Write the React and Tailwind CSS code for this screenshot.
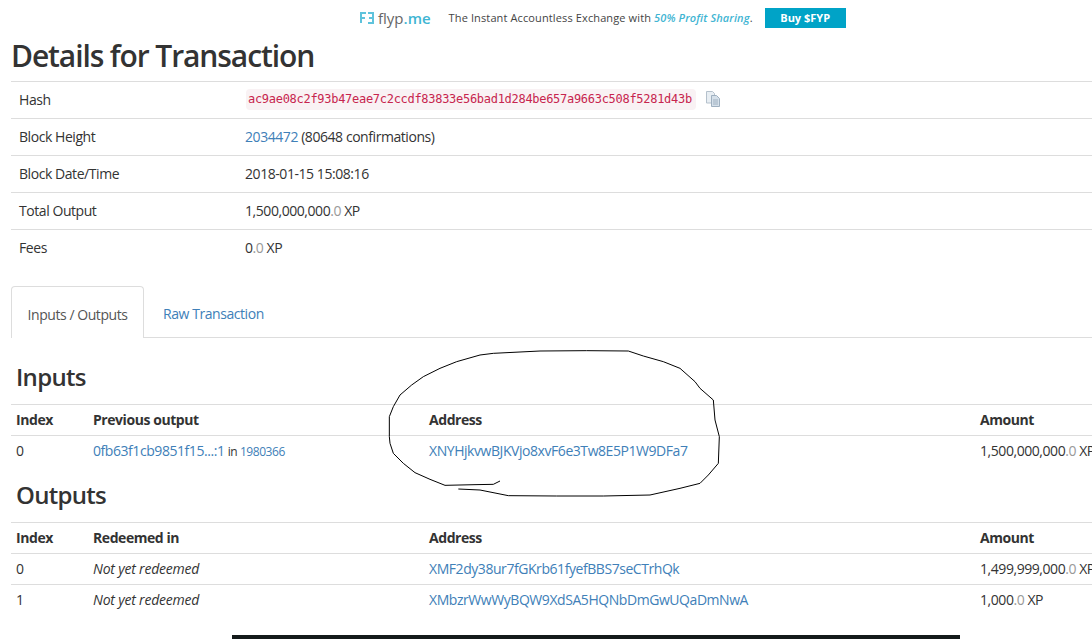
import React from "react";

const linkClass = "text-[#4080b8]";

// small grey decimal part of an amount
const Amount = ({ whole, unit = "XP" }) => (
  <span>
    {whole}
    <span className="text-[#999]">.0</span> {unit}
  </span>
);

const summaryRows = [
  {
    label: "Hash",
    value: (
      <span className="flex items-center">
        <code className="ml-px mt-px rounded bg-[#f9f2f4] pl-[2px] pr-1 py-0.5 text-[12px] leading-[17px] text-[#c7254e] font-['DejaVu_Sans_Mono',monospace] tracking-[-0.29px]">
          ac9ae08c2f93b47eae7c2ccdf83833e56bad1d284be657a9663c508f5281d43b
        </code>
        <svg className="ml-[9px]" width="16" height="16" viewBox="0 0 16 16">
          <path d="M1.5 0.5h6l2 2v9.5h-8z" fill="#e8eef3" stroke="#b5c1cc" />
          <path d="M6.5 4.5h5l3 3v8h-8z" fill="#d5e0ea" stroke="#9fb0c0" />
          <path d="M8 9h5M8 11h5M8 13h5" stroke="#9fb0c0" />
        </svg>
      </span>
    ),
  },
  {
    label: "Block Height",
    value: (
      <span>
        <a className={linkClass}>2034472</a> (80648 confirmations)
      </span>
    ),
  },
  { label: "Block Date/Time", value: "2018-01-15 15:08:16" },
  { label: "Total Output", value: <Amount whole="1,500,000,000" /> },
  { label: "Fees", value: <Amount whole="0" /> },
];

const IoTable = ({ secondHeader, rows }) => (
  <div className="w-[1120px] text-[14px] leading-[20px] text-[#333]">
    <div className="grid grid-cols-[77px_336px_551px_1fr] border-y border-[#ddd] py-[5px] pl-[5px] font-bold">
      <div>Index</div>
      <div>{secondHeader}</div>
      <div>Address</div>
      <div>Amount</div>
    </div>
    {rows.map((row, i) => (
      <div
        key={i}
        className={`grid grid-cols-[77px_336px_551px_1fr] py-[5px] pl-[5px] ${
          i > 0 ? "border-t border-[#ddd]" : ""
        }`}
      >
        <div>{i}</div>
        <div>{row.prev}</div>
        <div>
          <a className={linkClass}>{row.address}</a>
        </div>
        <div>{row.amount}</div>
      </div>
    ))}
  </div>
);

const notRedeemed = <i className="tracking-[-0.2px]">Not yet redeemed</i>;

export default function App() {
  return (
    <div className="relative h-[639px] w-[1092px] overflow-hidden bg-white text-[14px] text-[#333] font-['Open_Sans',sans-serif] tracking-[-0.44px]">
      {/* Ad banner */}
      <div className="flex h-[36px] items-center pl-[360px]">
        <svg width="14" height="12" viewBox="0 0 14 12" fill="none" stroke="#5fc3dc" strokeWidth="2">
          <path d="M6 1H1v10M1 6h4" />
          <path d="M8 1h5v10H8M9 6h4" />
        </svg>
        <span className="ml-1 text-[15px] tracking-normal text-[#666]">
          flyp<span className="font-semibold text-[#3fb5d3]">.me</span>
        </span>
        <span className="ml-[18px] text-[11px] tracking-[0.12px] text-[#444]">
          The Instant Accountless Exchange with{" "}
          <i className="font-semibold text-[#3fb5d3]">50% Profit Sharing</i>.
        </span>
        <a className="ml-[12px] flex h-[20px] w-[81px] items-center justify-center bg-[#00a3c7] text-[11px] font-bold tracking-normal text-white">
          Buy $FYP
        </a>
      </div>

      <div className="pl-[11px]">
        <h1 className="h-[45px] text-[30px] font-semibold leading-[40px] tracking-[-1.1px] text-[#333]">
          Details for Transaction
        </h1>

        {/* Summary table */}
        <div className="w-[1120px]">
          {summaryRows.map((row) => (
            <div
              key={row.label}
              className="grid h-[37px] grid-cols-[226px_1fr] items-center border-t border-[#ddd] pb-[2px] pl-[8px]"
            >
              <div>{row.label}</div>
              <div>{row.value}</div>
            </div>
          ))}
        </div>

        {/* Tabs */}
        <div className="mt-[20px] flex h-[52px] w-[1120px] border-b border-[#ddd]">
          <div className="-mb-px flex h-[52px] w-[133px] items-center justify-center rounded-t border border-b-0 border-[#ddd] bg-white pt-[3px] text-[#555]">
            Inputs / Outputs
          </div>
          <a className={`ml-[19px] flex items-center pt-[3px] ${linkClass}`}>Raw Transaction</a>
        </div>

        <h3 className="ml-[5px] mt-[22px] h-[44px] text-[24px] font-semibold leading-[33px] tracking-[-0.7px]">
          Inputs
        </h3>
        <IoTable
          secondHeader="Previous output"
          rows={[
            {
              prev: (
                <span>
                  <a className={linkClass}>0fb63f1cb9851f15...:1</a>{" "}
                  <span className="text-[12px]">
                    in <a className={linkClass}>1980366</a>
                  </span>
                </span>
              ),
              address: "XNYHjkvwBJKVjo8xvF6e3Tw8E5P1W9DFa7",
              amount: <Amount whole="1,500,000,000" />,
            },
          ]}
        />

        <h3 className="ml-[5px] mt-[11px] h-[44px] text-[24px] font-semibold leading-[33px] tracking-[-0.7px]">
          Outputs
        </h3>
        <IoTable
          secondHeader="Redeemed in"
          rows={[
            {
              prev: notRedeemed,
              address: "XMF2dy38ur7fGKrb61fyefBBS7seCTrhQk",
              amount: <Amount whole="1,499,999,000" />,
            },
            {
              prev: notRedeemed,
              address: "XMbzrWwWyBQW9XdSA5HQNbDmGwUQaDmNwA",
              amount: <Amount whole="1,000" />,
            },
          ]}
        />
      </div>

      {/* Top edge of the image below the fold */}
      <div className="absolute left-[232px] top-[635px] h-[4px] w-[728px] bg-[#141a1a]" />

      {/* Hand-drawn circle over the address */}
      <svg
        className="pointer-events-none absolute left-[380px] top-[340px]"
        width="350"
        height="170"
        viewBox="0 0 1050 510"
        fill="none"
        stroke="#000"
        strokeWidth="3"
      >
        <path d="M360 423L340 433L285 434L195 436L150 418L105 398L70 370L40 340L30 310L28 290L28 230L40 200L60 165L95 135L130 110L180 85L230 65L300 45L340 40L480 33L620 32L745 33L790 48L850 65L900 85L945 125L960 145L1000 180L1005 240L1018 290L1015 370L985 405L960 430L900 445L810 465L670 468L530 468L385 467L300 450L235 447" />
      </svg>
    </div>
  );
}
